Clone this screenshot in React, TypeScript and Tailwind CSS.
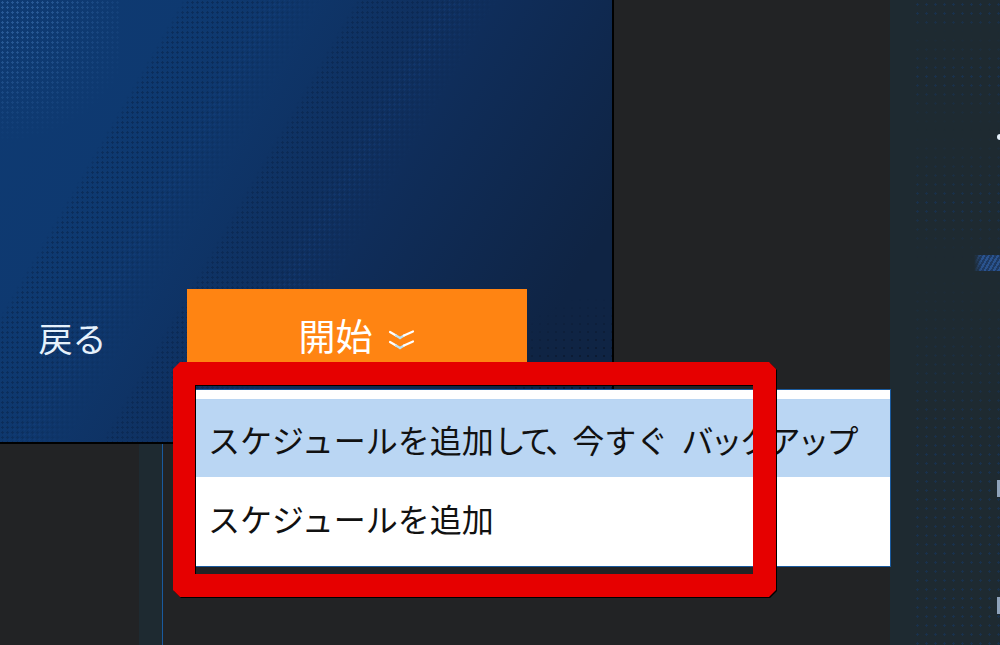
const FONT = "[font-family:'Noto_Sans_CJK_JP','Noto_Sans',sans-serif]";

function DoubleChevron() {
  return (
    <svg width="28" height="24" viewBox="0 0 28 24" fill="none" strokeWidth="2.2" strokeLinecap="round" className="ml-[15px] mt-[9px]">
      <path d="M2 4l6 3.5" stroke="#ffffff" />
      <path d="M8 7.5l4 2.5" stroke="#bfe3f2" />
      <path d="M12 10l4-2.5" stroke="#bfe3f2" />
      <path d="M16 7.5l9-4" stroke="#ffffff" />
      <path d="M2 14l6 3.5" stroke="#ffffff" />
      <path d="M8 17.5l4 2.5" stroke="#bfe3f2" />
      <path d="M12 20l4-2.5" stroke="#bfe3f2" />
      <path d="M16 17.5l9-4" stroke="#ffffff" />
    </svg>
  );
}

function BluePanel() {
  return (
    <div className="relative w-[614px] h-[444px] flex flex-col justify-end border-r-2 border-b-2 border-black bg-[linear-gradient(120deg,#0e3a72_0%,#0e3970_25%,#0f2e5c_55%,#0f2444_85%,#0f2444_100%)]">
      {/* dither bands */}
      <div className="absolute inset-0 opacity-50 bg-[radial-gradient(circle,#0a2348_1px,transparent_1.2px)] bg-[length:5px_5px] [mask-image:linear-gradient(120deg,transparent_21%,#000_22%,#000_29%,transparent_37%,transparent_41%,#000_42%,#000_49%,transparent_57%)]" />
      <div className="absolute inset-0 opacity-30 bg-[radial-gradient(circle,#17458a_1px,transparent_1.2px)] bg-[length:5px_5px] bg-[position:2px_2px] [mask-image:linear-gradient(120deg,transparent_28%,#000_32%,transparent_38%,transparent_48%,#000_52%,transparent_58%)]" />
      {/* light dots, top left */}
      <div className="absolute left-0 top-0 w-[120px] h-[150px] opacity-60 bg-[radial-gradient(circle,#3a6fae_1px,transparent_1.3px)] bg-[length:5px_5px] [mask-image:radial-gradient(circle_at_top_left,#000_20%,transparent_75%)]" />
      {/* dark dots, bottom right */}
      <div className="absolute right-0 bottom-0 w-[100px] h-[170px] opacity-70 bg-[radial-gradient(circle,#0a1222_1px,transparent_1.3px)] bg-[length:8px_8px] [mask-image:radial-gradient(circle_at_bottom_right,#000_35%,transparent_75%)]" />

      <div className="relative h-[153px] flex items-start gap-[42px]">
        <button className="w-[145px] h-[73px] flex items-center justify-center pt-[25px] text-[34px] leading-none text-[#e6f1fb]">
          戻る
        </button>
        <button className="w-[340px] h-[73px] flex items-center justify-center pt-[26px] pb-[6px] bg-[#ff8412] text-[37px] leading-none text-white">
          開始
          <DoubleChevron />
        </button>
      </div>
    </div>
  );
}

function ScheduleMenu() {
  return (
    <div className="absolute left-[195px] top-[389px] w-[696px] h-[178px] pt-[9px] border-t border-r border-b border-[#1a5a9e] bg-white text-[32px] leading-none text-[#111111]">
      <div className="h-[78px] flex items-center pl-[13px] pt-[2px] bg-[#bad6f3] whitespace-pre">
        <span>
          スケジュールを追加<span className="tracking-[-5px]">して、</span>今すぐ <span className="ml-[6px] tracking-[-3px]">バックアップ</span>
        </span>
      </div>
      <div className="h-[82px] flex items-center pl-[13px] whitespace-nowrap">
        スケジュールを追加
      </div>
    </div>
  );
}

function SidePanel() {
  return (
    <div className="relative w-[110px] h-full flex flex-col items-end bg-[#1e2a31]">
      <div className="absolute left-[23px] right-0 top-0 bottom-0 opacity-60 bg-[radial-gradient(circle,#16365f_1px,transparent_1.3px)] bg-[length:9px_9px] [mask-image:linear-gradient(180deg,#000_0%,#000_3%,transparent_5%,#000_12%,transparent_20%,#000_32%,transparent_40%,#000_70%,#000_100%)]" />
      <div className="relative mt-[134px] w-[3px] h-[6px] rounded-l-full bg-[#e6f1fb]" />
      <div className="relative mt-[115px] w-[26px] h-[16px] opacity-80 bg-[repeating-linear-gradient(120deg,#2e5ea6_0px,#2e5ea6_2px,#1f3f70_2px,#1f3f70_4px)] [mask-image:linear-gradient(90deg,transparent,#000_30%)]" />
      <div className="relative mt-[209px] w-[3px] h-[17px] bg-[#8fa3bb]" />
      <div className="relative mt-[100px] w-[3px] h-[17px] bg-[#8fa3bb]" />
    </div>
  );
}

export default function App() {
  return (
    <div className={`relative w-[1000px] h-[645px] overflow-hidden flex bg-[#222325] ${FONT}`}>
      <div className="w-[890px] h-full flex flex-col">
        <BluePanel />
        <div className="flex-1 ml-[139px] w-[24px] border-r border-[#1a5a9e] bg-[#1e2a31]" />
      </div>
      <SidePanel />
      <ScheduleMenu />

      {/* red annotation frame */}
      <div className="absolute left-[173px] top-[362px] drop-shadow-[1px_1px_0_#000000]">
        <div className="w-[603px] h-[235px] border-[22px] border-t-[23px] border-r-[23px] border-b-[23px] border-[#e60000] [clip-path:polygon(7px_0,calc(100%-7px)_0,100%_7px,100%_calc(100%-7px),calc(100%-7px)_100%,7px_100%,0_calc(100%-7px),0_7px)]" />
      </div>
    </div>
  );
}
